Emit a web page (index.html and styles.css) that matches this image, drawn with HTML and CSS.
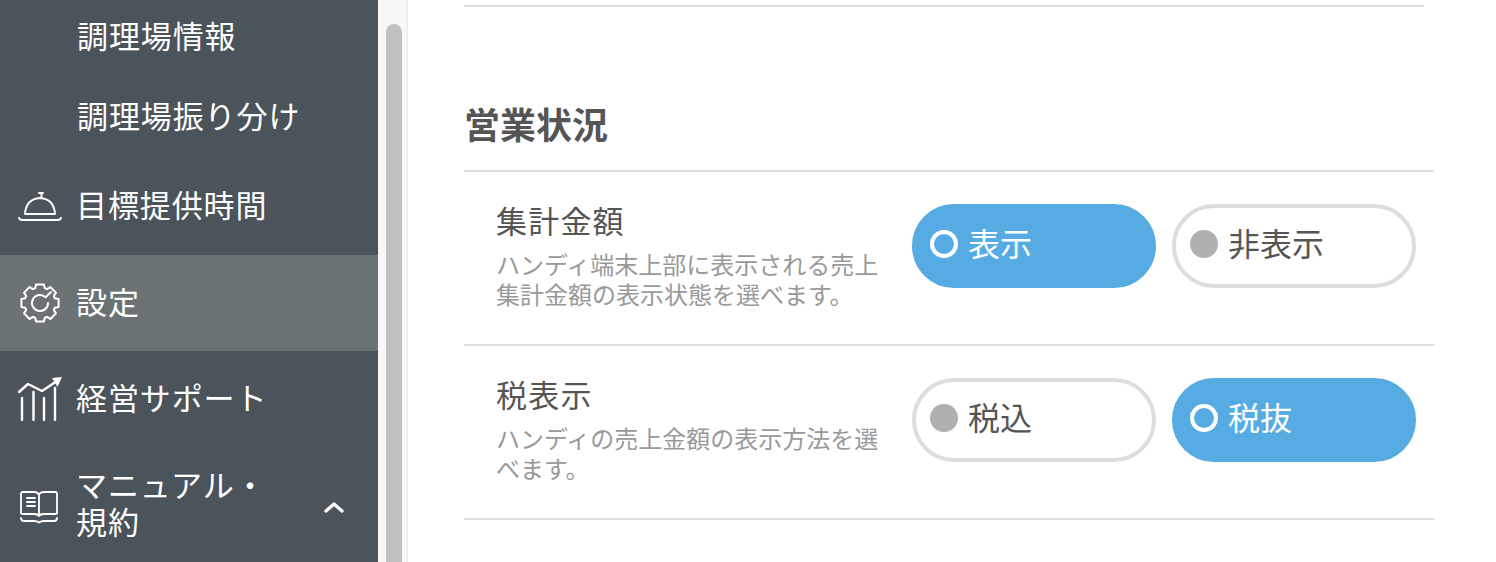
FILE: index.html
```html
<!DOCTYPE html>
<html lang="ja">
<head>
<meta charset="utf-8">
<title>設定</title>
<link rel="stylesheet" href="styles.css">
</head>
<body>
<div class="app">
  <nav class="sidebar">
    <div class="nav-item sub"><span class="nav-label">調理場情報</span></div>
    <div class="nav-item sub"><span class="nav-label">調理場振り分け</span></div>
    <div class="nav-item">
      <svg class="nav-icon" viewBox="0 0 44 44" fill="none" stroke="#fff" stroke-width="2" stroke-linecap="round" stroke-linejoin="round"><path d="M1 34q1 2 3 2h36q2 0 3-2M7 30q1-15 15-16q14 1 15 16zM23.500 14V9.500M21 9h4"/></svg>
      <span class="nav-label">目標提供時間</span>
    </div>
    <div class="nav-item active">
      <svg class="nav-icon" viewBox="0 0 44 44" fill="none" stroke="#fff" stroke-width="2" stroke-linecap="round" stroke-linejoin="round"><path d="M17.200 7.260 18.050 3.420H25.950L26.800 7.260Q28 7.600 29.040 8.190L32.350 6.060 37.940 11.650 35.810 14.960Q36.400 16 36.740 17.200L40.580 18.050V25.950L36.740 26.800Q36.400 28 35.810 29.040L37.940 32.350 32.350 37.940 29.040 35.810Q28 36.400 26.800 36.740L25.950 40.580H18.050L17.200 36.740Q16 36.400 14.960 35.810L11.650 37.940 6.060 32.350 8.190 29.040Q7.600 28 7.260 26.800L3.420 25.950V18.050L7.260 17.200Q7.600 16 8.190 14.960L6.060 11.650 11.650 6.060 14.960 8.190Q16 7.600 17.200 7.260Z"/><path d="M33 11 27.600 16.300A8 8 0 1 0 30 22"/></svg>
      <span class="nav-label">設定</span>
    </div>
    <div class="nav-item">
      <svg class="nav-icon" viewBox="0 0 44 44" fill="none" stroke="#fff" stroke-width="2.400" stroke-linecap="round" stroke-linejoin="round"><path d="M1 15 10 7 24 14 39 4"/><path d="M4 21V43M15.500 15V43M26 21V43M37 11V43"/><path d="M44 0 34 1 39.500 10z" fill="#fff" stroke="none"/></svg>
      <span class="nav-label">経営サポート</span>
    </div>
    <div class="nav-item tall">
      <svg class="nav-icon" viewBox="0 0 44 44" fill="none" stroke="#fff" stroke-width="1.800" stroke-linecap="round" stroke-linejoin="round"><path d="M3 30V11q0-2 2-2h11q4 0 5 3q1-3 5-3h11q2 0 2 2v19q0 1-2 1H26q-4 0-5 2q-1-2-5-2H5q-2 0-2-1zM21 12v21M9 15h8M9 19h8M9 23h8"/><path d="M3 35q0 3 3 3h10q3 0 5 1.500q2-1.500 5-1.500h10q3 0 3-3"/></svg>
      <span class="nav-label">マニュアル・規約</span>
      <svg class="chevron" viewBox="0 0 20 12" fill="none" stroke="#fff" stroke-width="3.400" stroke-linecap="round" stroke-linejoin="round"><path d="M2 10 10 3l8 7"/></svg>
    </div>
  </nav>
  <div class="scrollbar"><div class="thumb"></div></div>
  <main class="main">
    <div class="top-rule"></div>
    <section class="section">
      <h2 class="section-title">営業状況</h2>
      <div class="row">
        <div class="row-text">
          <div class="row-title">集計金額</div>
          <p class="row-desc">ハンディ端末上部に表示される売上集計金額の表示状態を選べます。</p>
        </div>
        <div class="options">
          <div class="option on"><span class="radio"></span><span class="option-label">表示</span></div>
          <div class="option"><span class="radio"></span><span class="option-label">非表示</span></div>
        </div>
      </div>
      <div class="row">
        <div class="row-text">
          <div class="row-title">税表示</div>
          <p class="row-desc">ハンディの売上金額の表示方法を選べます。</p>
        </div>
        <div class="options">
          <div class="option"><span class="radio"></span><span class="option-label">税込</span></div>
          <div class="option on"><span class="radio"></span><span class="option-label">税抜</span></div>
        </div>
      </div>
    </section>
  </main>
</div>
</body>
</html>
```
FILE: styles.css
```css
* { box-sizing: border-box; }
html, body { margin: 0; height: 100%; overflow: hidden; }
body {
  font-family: "Noto Sans CJK JP", "Noto Sans", sans-serif;
  color: #555;
  background: #fff;
}
.app { display: flex; height: 562px; overflow: hidden; }

.sidebar {
  width: 378px;
  flex: none;
  background: #4b535b;
  color: #fff;
  overflow: hidden;
  display: flex;
  flex-direction: column;
}
.nav-item {
  flex: none;
  height: 96px;
  display: flex;
  align-items: center;
  gap: 14px;
  padding: 0 20px 0 18px;
  font-size: 31px;
  letter-spacing: 0.9px;
  line-height: 37px;
}
.nav-item.sub {
  height: 80px;
  padding-left: 77px;
}
.nav-item.sub:first-child { margin-top: -3px; }
.nav-item.sub + .nav-item:not(.sub) { height: 98px; }
.nav-item.active { background: #6b7274; }
.nav-item.tall { height: 116px; }
.nav-icon { width: 44px; height: 44px; flex: none; }
.nav-label { flex: 1; min-width: 0; padding-bottom: 6px; }
.nav-item.tall .nav-label { width: 198px; flex: none; }
.chevron { width: 20px; height: 12px; flex: none; margin: 4px 0 0 36px; }

.scrollbar {
  width: 30px;
  flex: none;
  background: #f8f8f8;
  border-right: 2px solid #eeeeee;
  padding: 24px 4px 0 8px;
}
.thumb {
  height: 700px;
  background: #c1c1c1;
  border-radius: 8px;
}

.main {
  flex: 1;
  min-width: 0;
  padding: 5px 62px 0 56px;
}
.top-rule {
  height: 2px;
  background: #dddddd;
  margin-right: 10px;
}
.section { margin-top: 92px; }
.section-title {
  margin: 0;
  font-size: 36px;
  font-weight: 700;
  line-height: 48px;
  height: 71px;
  color: #555;
}
.row {
  display: flex;
  align-items: flex-start;
  justify-content: space-between;
  height: 174px;
  padding: 28px 18px 0 32px;
  border-top: 2px solid #dddddd;
}
.row:last-child {
  height: 176px;
  border-bottom: 2px solid #dddddd;
}
.row-text { width: 392px; }
.row-title {
  font-size: 31px;
  line-height: 40px;
  letter-spacing: 1.2px;
  color: #555;
}
.row-desc {
  margin: 9px 0 0;
  font-size: 24px;
  line-height: 30px;
  color: #999;
}
.options { display: flex; gap: 16px; margin-top: 4px; }
.option {
  width: 244px;
  height: 84px;
  border-radius: 42px;
  border: 4px solid #dddddd;
  background: #fff;
  display: flex;
  align-items: center;
  gap: 10px;
  padding: 0 0 4px 14px;
  font-size: 32px;
  color: #555;
}
.option-label { padding-bottom: 5px; }
.radio {
  width: 28px;
  height: 28px;
  border-radius: 50%;
  background: #b0b0b0;
  flex: none;
}
.option.on {
  background: #56ace2;
  border-color: #56ace2;
  color: #fff;
}
.option.on .radio {
  background: transparent;
  border: 4px solid #fff;
}
```
